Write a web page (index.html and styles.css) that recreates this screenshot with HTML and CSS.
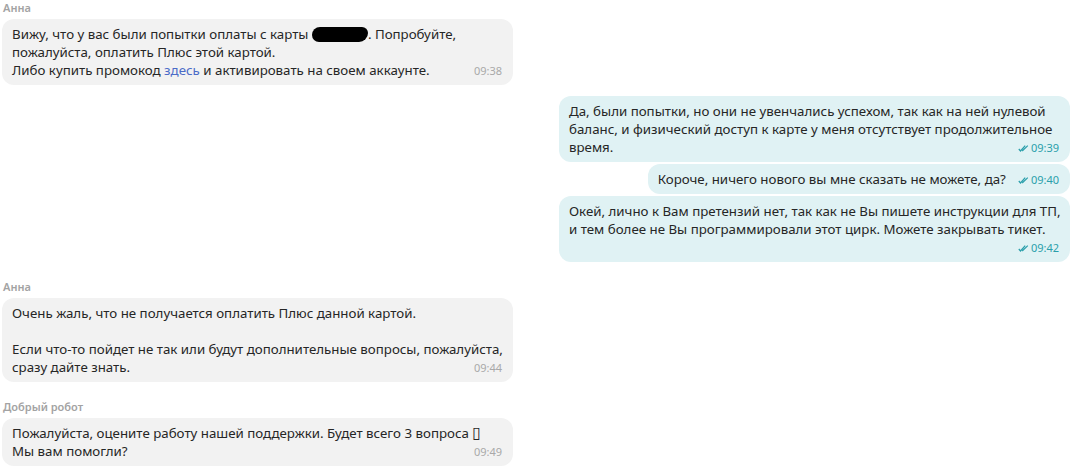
FILE: index.html
```html
<!DOCTYPE html>
<html lang="ru">
<head>
<meta charset="utf-8">
<link rel="stylesheet" href="styles.css">
</head>
<body>
<div class="chat">
  <div class="group in">
    <div class="author">Анна</div>
    <div class="bubble">Вижу, что у вас были попытки оплаты с карты <span class="redact"></span>. Попробуйте,<br>пожалуйста, оплатить Плюс этой картой.<br>Либо купить промокод <a class="link" href="#">здесь</a> и активировать на своем аккаунте.<span class="time">09:38</span></div>
  </div>

  <div class="group out">
    <div class="bubble">Да, были попытки, но они не увенчались успехом, так как на ней нулевой<br>баланс, и физический доступ к карте у меня отсутствует продолжительное<br>время.<span class="time"><svg class="check" viewBox="0 0 11 7" width="11" height="7"><path d="M0.8 4 L2.5 6 L7.2 0.6 M4.2 6 L9.8 0.6" fill="none" stroke="currentColor" stroke-width="1.2"/></svg>09:39</span></div>
    <div class="bubble fit">Короче, ничего нового вы мне сказать не можете, да?<span class="time"><svg class="check" viewBox="0 0 11 7" width="11" height="7"><path d="M0.8 4 L2.5 6 L7.2 0.6 M4.2 6 L9.8 0.6" fill="none" stroke="currentColor" stroke-width="1.2"/></svg>09:40</span></div>
    <div class="bubble">Окей, лично к Вам претензий нет, так как не Вы пишете инструкции для ТП,<br>и тем более не Вы программировали этот цирк. Можете закрывать тикет.<span class="time below"><svg class="check" viewBox="0 0 11 7" width="11" height="7"><path d="M0.8 4 L2.5 6 L7.2 0.6 M4.2 6 L9.8 0.6" fill="none" stroke="currentColor" stroke-width="1.2"/></svg>09:42</span></div>
  </div>

  <div class="group in">
    <div class="author">Анна</div>
    <div class="bubble">Очень жаль, что не получается оплатить Плюс данной картой.<br><br>Если что-то пойдет не так или будут дополнительные вопросы, пожалуйста,<br>сразу дайте знать.<span class="time">09:44</span></div>
  </div>

  <div class="group in">
    <div class="author">Добрый робот</div>
    <div class="bubble">Пожалуйста, оцените работу нашей поддержки. Будет всего 3 вопроса <span class="tofu">▯</span><br>Мы вам помогли?<span class="time">09:49</span></div>
  </div>
</div>
</body>
</html>
```

FILE: styles.css
```css
html, body {
  margin: 0;
  padding: 0;
  background: #ffffff;
}

body {
  font-family: "Noto Sans", "Open Sans", "DejaVu Sans", sans-serif;
  font-size: 13.3px;
  line-height: 18px;
  color: #262626;
}

.chat {
  display: flex;
  flex-direction: column;
  padding: 0 2px 0 2px;
}

.group {
  display: flex;
  flex-direction: column;
  gap: 4px;
}

.group + .group {
  margin-top: 11px;
}

.group.in {
  align-items: flex-start;
}

.group.out {
  align-items: flex-end;
  gap: 2px;
}

.author {
  font-size: 11px;
  line-height: 15px;
  font-weight: 600;
  color: #a3a3a3;
  padding: 6px 0 0 1px;
}

.group:first-child .author {
  padding-top: 0;
}

.bubble {
  display: flow-root;
  box-sizing: border-box;
  width: 511px;
  padding: 6px 11px 6px 10px;
  border-radius: 12px;
  white-space: nowrap;
}

.bubble.fit {
  width: auto;
}

.in .bubble {
  background: #f2f2f2;
}

.out .bubble {
  background: #e0f2f4;
}

.time {
  float: right;
  display: flex;
  align-items: center;
  gap: 2px;
  margin: 1px 0 -1px 12px;
  font-size: 11px;
  line-height: 18px;
  color: #a9a9a9;
}

.out .time {
  color: #2a9fab;
}

.time.below {
  float: none;
  justify-content: flex-end;
  margin: 1px 0 -1px 0;
}

.check {
  display: block;
  margin-top: 1px;
}

.link {
  color: #4c6bc8;
  text-decoration: none;
}

.redact {
  display: inline-block;
  width: 56px;
  height: 15px;
  background: #000;
  border-radius: 8px 6px 9px 7px;
  vertical-align: -3px;
}

.tofu {
  font-family: "DejaVu Sans", sans-serif;
  font-size: 16px;
  line-height: 0;
}
```
